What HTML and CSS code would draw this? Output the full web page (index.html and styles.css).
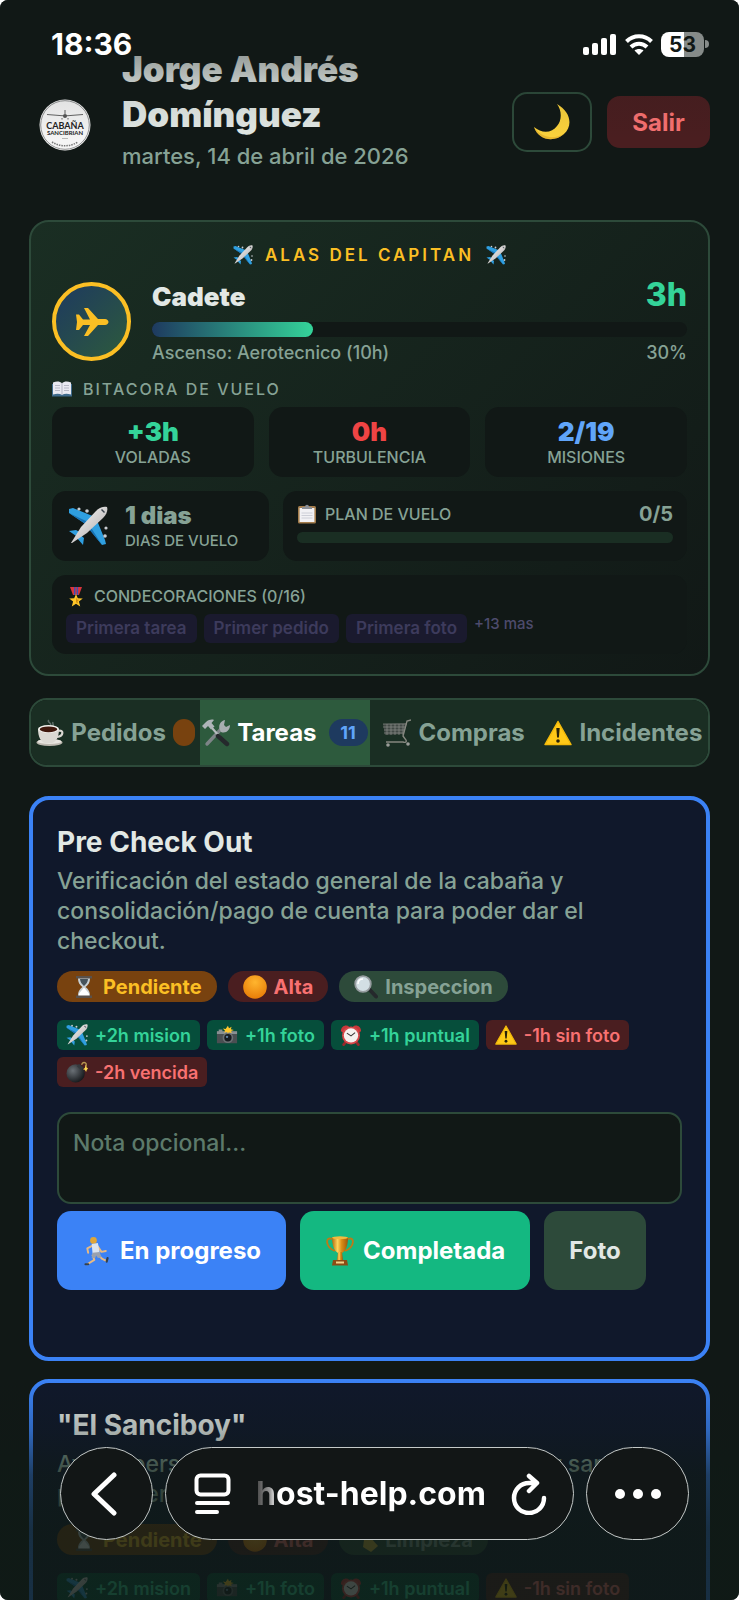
FILE: index.html
```html
<!DOCTYPE html>
<html lang="es">

<head>
    <meta charset="UTF-8">
    <meta name="viewport" content="width=device-width, initial-scale=1.0">
    <title>Cabaña Sancibrian - Tareas</title>
    <link rel="stylesheet" href="styles.css">
</head>

<body>
    <!-- icon set -->
    <svg class="sprite" aria-hidden="true">
        <defs>
            <linearGradient id="gBody" x1="0" y1="0" x2="1" y2="1">
                <stop offset="0" stop-color="#ffffff" />
                <stop offset="1" stop-color="#a9a4a4" />
            </linearGradient>
            <linearGradient id="gGold" x1="0" y1="0" x2="1" y2="0">
                <stop offset="0" stop-color="#b36a0c" />
                <stop offset=".35" stop-color="#ffd45c" />
                <stop offset=".6" stop-color="#d98d16" />
                <stop offset="1" stop-color="#9c5608" />
            </linearGradient>
            <radialGradient id="gOrange" cx=".5" cy=".3" r=".7">
                <stop offset="0" stop-color="#ffb52e" />
                <stop offset="1" stop-color="#e87d08" />
            </radialGradient>
            <radialGradient id="gBomb" cx=".35" cy=".35" r=".7">
                <stop offset="0" stop-color="#6a7076" />
                <stop offset="1" stop-color="#15181b" />
            </radialGradient>
        </defs>
        <symbol id="plane" viewBox="0 0 40 40">
            <path fill="#2f9fe0" d="M1 3l4-1 22 9-8 8L1 7zM38 38l-4 1-15-19 9-8 9 22zM1 25l7-1 7 4-4 4zM15 39l1-7-5-4-2 4z" />
            <path fill="#1873b5" d="M1 7l17 8 1 4L1 7zM34 39L20 22l2-2z" />
            <g fill="#c9cdd2">
                <circle cx="11" cy="3" r="1.6" /><circle cx="19" cy="5" r="1.8" />
                <circle cx="38" cy="22" r="1.6" /><circle cx="37" cy="30" r="1.8" />
            </g>
            <path fill="url(#gBody)" d="M39 1c1 3 0 7-4 11L19 27 4 37l-1 0 10-16L28 5c4-4 8-5 11-4z" />
            <path fill="#39424c" d="M34 3l3 3-1 1-3-3z" />
        </symbol>
        <symbol id="book" viewBox="0 0 20 16">
            <path fill="#3f6b8c" d="M0 3h20v12.500H0z" />
            <path fill="#e9e9f1" d="M1 1.500c4-1.500 7-1 9 .8V14c-2-1.300-5-1.500-9-.5zM19 1.500c-4-1.500-7-1-9 .8V14c2-1.300 5-1.500 9-.5z" />
            <path stroke="#a2a3b2" stroke-width=".7" fill="none" d="M3 4.500h5M3 7h5M3 9.500h5M12 4.500h5M12 7h5M12 9.500h5M10 2v12" />
        </symbol>
        <symbol id="clipboard" viewBox="0 0 20 20">
            <rect x="1" y="2" width="18" height="17.500" rx="1.500" fill="#a47d4c" />
            <rect x="2.600" y="4" width="14.800" height="14" fill="#f1f1f4" />
            <path stroke="#c4c6cf" stroke-width=".8" d="M4.500 9h11M4.500 11.500h11M4.500 14h11" />
            <path fill="#8b9098" d="M5 5V3h3c0-3 4-3 4 0h3v2z" />
        </symbol>
        <symbol id="medal" viewBox="0 0 20 20">
            <path fill="#d8343c" d="M4 0h12l-3 8H7z" />
            <path fill="#3c53b5" d="M8 0h1.400v8H8zM10.700 0h1.400v8h-1.400z" />
            <path fill="#ffc629" d="M10 7l1.800 4.300 5 .3-3.900 3 1.300 4.900-4.200-2.800-4.200 2.800 1.300-4.900-3.900-3 5-.3z" />
            <path fill="#d08c0c" d="M10 10l.9 2.600 2.500.1-2 1.500.7 2.400-2.100-1.400z" />
        </symbol>
        <symbol id="coffee" viewBox="0 0 28 28">
            <path stroke="#7b8784" stroke-width="1.500" fill="none" opacity=".7" d="M13 1c-3 2 4 3 1 6M17 3c-1 2 1 2 0 4" />
            <ellipse cx="13.500" cy="23.500" rx="13" ry="3.500" fill="#bdb8b0" />
            <ellipse cx="13.500" cy="22.500" rx="12" ry="2.600" fill="#e8e5df" />
            <path fill="none" stroke="#d8d5d0" stroke-width="2.200" d="M22 12c6-2 6 5-1 6" />
            <path fill="#dcd9d3" d="M2 10h21c0 8-3 13-7 14H9c-4-1-7-6-7-14z" />
            <ellipse cx="12.500" cy="10" rx="10.500" ry="4" fill="#f2f0ec" />
            <ellipse cx="12.500" cy="10.300" rx="8.800" ry="2.900" fill="#40180d" />
        </symbol>
        <symbol id="tools" viewBox="0 0 28 28">
            <path fill="none" stroke="#7d8487" stroke-width="3.400" stroke-linecap="round" d="M21 8L5 25" />
            <path fill="#a8aeb1" d="M18 11c-2-4 0-9 5-10l-1 5 2 2 4-2c0 5-4 9-9 7z" />
            <path stroke="#b6bbbe" stroke-width="2.200" d="M10 9l8 9" />
            <path stroke="#25292c" stroke-width="4.400" stroke-linecap="round" d="M16 17l9 8" />
            <path fill="#aeb4b8" d="M0 7l4-4c3-2.500 6-3 8-2L9.500 4l3 3.500-3.500 3L6 7 3 10z" />
        </symbol>
        <symbol id="cart" viewBox="0 0 28 28">
            <path fill="#414945" d="M0 5l24-1-3 11-19 1z" />
            <path fill="none" stroke="#8a8c88" stroke-width=".7" d="M0 5h24M0 8h23M1 11h21M1 14h20M4 5v11M8 5v11M12 5v11M16 5v11M20 5v11" />
            <path fill="none" stroke="#85877f" stroke-width="1.400" d="M28 1l-4 1-4 15 3 4c1 2-1 3-3 2L3 23" />
            <circle cx="5" cy="26" r="1.800" fill="#9a9c98" /><circle cx="25" cy="25" r="1.800" fill="#9a9c98" />
        </symbol>
        <symbol id="warning" viewBox="0 0 28 26">
            <path fill="#ffc918" stroke="#f2b90a" stroke-width="1.500" stroke-linejoin="round" d="M14 1.500L27 24.500H1z" />
            <path fill="#282209" d="M12.300 8h3.400l-.8 9.500h-1.800z" />
            <circle cx="14" cy="21" r="1.800" fill="#282209" />
        </symbol>
        <symbol id="hourglass" viewBox="0 0 24 24">
            <path fill="#c7cfd3" d="M6 3h12c0 5-2 7-4.500 9 2.500 2 4.500 4 4.500 9H6c0-5 2-7 4.500-9C8 10 6 8 6 3z" />
            <path fill="#46535b" d="M8 4h8c0 3-2 5-4 7-2-2-4-4-4-7z" />
            <path fill="#fff" d="M12 12.500l5 6V21H7v-2.500z" />
            <path fill="#59514b" d="M4 1h16v2.500H4zM4 20.500h16V23H4z" />
        </symbol>
        <symbol id="orange" viewBox="0 0 24 24">
            <circle cx="12" cy="12" r="11.800" fill="url(#gOrange)" />
        </symbol>
        <symbol id="lens" viewBox="0 0 24 24">
            <path stroke="#25292c" stroke-width="4" stroke-linecap="round" d="M15 14l7 7.500" />
            <circle cx="9" cy="9" r="7.800" fill="#d3dfe4" stroke="#979da0" stroke-width="1.800" />
            <path fill="none" stroke="#fff" stroke-width="1.500" d="M4 9c0-3 2-5 5-5" />
        </symbol>
        <symbol id="camera" viewBox="0 0 24 20">
            <path fill="#4a4f52" d="M1 6h22v13H1z" />
            <path fill="#899093" d="M1 6h22v3H1zM3 4h4v2H3z" />
            <circle cx="13" cy="13" r="5.800" fill="#6b7174" />
            <circle cx="13" cy="13" r="4" fill="#171b20" />
            <circle cx="12" cy="12" r="1.300" fill="#6484a4" />
            <path fill="#ffc72c" d="M13 0l1.200 2.500L17 1l-.8 2.600 3.300.9-3 1.200.6 2.100-3-.9L13 8.300l-1-1.500-3.300.7 1.300-2L7.500 3l3 .4z" />
        </symbol>
        <symbol id="alarm" viewBox="0 0 24 24">
            <path stroke="#94292b" stroke-width="3" stroke-linecap="round" d="M6 20l-2 2.500M18 20l2 2.500" />
            <path fill="#c8373a" d="M1 8C1 2 7 0 10 3L3 9zM23 8c0-6-6-8-9-5l7 6z" />
            <circle cx="12" cy="12.500" r="9.800" fill="#d6484a" />
            <circle cx="12" cy="12.500" r="7.800" fill="#f5f2ef" />
            <path fill="none" stroke="#393535" stroke-width="1.100" d="M7.500 10l4.500 3 4.500-3.500" />
        </symbol>
        <symbol id="bomb" viewBox="0 0 24 24">
            <circle cx="10.500" cy="13.500" r="10" fill="url(#gBomb)" />
            <path fill="#34393d" d="M14 3l5 4-2 3-5-4z" />
            <path fill="none" stroke="#b99752" stroke-width="1.500" d="M17 4c1-3 4-3 5-1v3" />
            <path fill="#ffd750" d="M21.500 4l1 3 1.500 1-1.500 2-.5 2-1.500-2.500L18.500 9l2-1.500z" />
        </symbol>
        <symbol id="runner" viewBox="0 0 28 34">
            <circle cx="10" cy="5" r="3.800" fill="#e0a637" />
            <path fill="none" stroke="#e7ba83" stroke-width="2.200" stroke-linecap="round" stroke-linejoin="round" d="M9 11l-6 3 1 5M15 12l4 6 5-1M9 22l2 5-8 5M16 22l4 4 4 2" />
            <path fill="#dce4ee" d="M8 9l7-1 2 11-8 1z" />
            <path fill="#9aa1ae" d="M9 19l8-1 2 6-4 1-2-3-1 3H8z" />
            <path stroke="#33404e" stroke-width="2.500" stroke-linecap="round" d="M1 32l3 0M25 29l1-4" />
        </symbol>
        <symbol id="trophy" viewBox="0 0 28 30">
            <path fill="none" stroke="#bd7a17" stroke-width="1.800" d="M6 3C-1 0-1 11 9 15M22 3c7-3 7 8-3 12" />
            <path fill="url(#gGold)" d="M6 1h16c0 8-2 14-6 16h-4C8 15 6 9 6 1z" />
            <path fill="url(#gGold)" d="M12 16h4l1 8h-6z" />
            <path fill="#8b4c16" d="M7 24h14l1 5.500H6z" />
            <path fill="#f3d489" d="M10 25.500h8v2h-8z" />
            <ellipse cx="14" cy="1.800" rx="8" ry="1.500" fill="#f2bb3e" />
        </symbol>
        <symbol id="moon" viewBox="0 0 36 36">
            <path fill="#fbd23c" d="M23 0c14 8 16 22 7 30C20 39 4 36 0 23c8 7 18 6 23-1 5-6 5-15 0-22z" />
            <path fill="#d79d22" opacity=".5" d="M0 23c4 13 20 16 30 7-9 5-22 5-30-7z" />
        </symbol>
        <symbol id="broom" viewBox="0 0 24 24">
            <path stroke="#9c6b3b" stroke-width="2" d="M3 1l10 12" />
            <path fill="#d6b53a" d="M10 12l6-3 8 9-7 6-8-5z" />
        </symbol>
    </svg>

    <div class="screen">
        <header class="header">
            <svg class="logo" viewBox="0 0 52 52" role="img" aria-label="Cabaña Sancibrian">
                <circle cx="26" cy="26" r="25.500" fill="#f5f5f5" />
                <circle cx="26" cy="26" r="24.300" fill="none" stroke="#77797a" stroke-width=".8" />
                <path fill="none" stroke="#555" stroke-width=".9" d="M8 15.500l15 1.200h6L44 15.500M26 11v4M23 19v1.500M29 19v1.500" />
                <circle cx="26" cy="17" r="2" fill="#555" />
                <text x="26" y="30" class="logo-name">CABAÑA</text>
                <text x="26" y="35.500" class="logo-sub">SANCIBRIAN</text>
                <path fill="none" stroke="#aaa" stroke-width=".8" d="M23 39.500h6" />
                <path fill="none" stroke="#777" stroke-width="1.500" stroke-dasharray="1.500 1" d="M13 43c8 5 18 5 26 0" />
            </svg>
            <div class="user">
                <h1>Jorge Andrés Domínguez</h1>
                <p>martes, 14 de abril de 2026</p>
            </div>
            <button class="theme-btn" type="button" aria-label="Modo oscuro"><svg class="icon-moon"><use href="#moon" /></svg></button>
            <button class="logout-btn" type="button">Salir</button>
        </header>

        <main class="content">
            <section class="wings">
                <h2 class="wings-title"><svg class="icon"><use href="#plane" /></svg>ALAS DEL CAPITAN<svg class="icon"><use href="#plane" /></svg></h2>

                <div class="rank">
                    <div class="rank-badge">
                        <svg viewBox="0 0 34 30" width="34" height="30" aria-hidden="true">
                            <path fill="#fbbf24" d="M1 7.500h3l4 5h7L9 1h4l10 11h7c2 0 3.500 1.500 3.500 3S32 18 30 18h-7L13 29H9l6-11H8l-4 5H1l1-8z" />
                        </svg>
                    </div>
                    <div class="rank-info">
                        <div class="rank-top">
                            <span class="rank-name">Cadete</span>
                            <span class="rank-hours">3h</span>
                        </div>
                        <div class="bar"><div class="bar-fill" style="width: 30%"></div></div>
                        <div class="rank-next"><span>Ascenso: Aerotecnico (10h)</span><span>30%</span></div>
                    </div>
                </div>

                <h3 class="log-title"><svg class="icon"><use href="#book" /></svg>BITACORA DE VUELO</h3>
                <div class="stats">
                    <div class="box stat"><strong class="green">+3h</strong><span>VOLADAS</span></div>
                    <div class="box stat"><strong class="red">0h</strong><span>TURBULENCIA</span></div>
                    <div class="box stat"><strong class="blue">2/19</strong><span>MISIONES</span></div>
                </div>

                <div class="flight">
                    <div class="box days">
                        <svg class="icon-days"><use href="#plane" /></svg>
                        <div><strong>1 dias</strong><span>DIAS DE VUELO</span></div>
                    </div>
                    <div class="box plan">
                        <div class="plan-top">
                            <span class="label"><svg class="icon"><use href="#clipboard" /></svg>PLAN DE VUELO</span>
                            <strong>0/5</strong>
                        </div>
                        <div class="plan-bar"></div>
                    </div>
                </div>

                <div class="box medals">
                    <span class="label"><svg class="icon"><use href="#medal" /></svg>CONDECORACIONES (0/16)</span>
                    <div class="medal-list">
                        <span class="medal">Primera tarea</span>
                        <span class="medal">Primer pedido</span>
                        <span class="medal">Primera foto</span>
                        <span class="medal-more">+13 mas</span>
                    </div>
                </div>
            </section>

            <nav class="tabs">
                <button type="button" class="tab"><svg class="icon-tab"><use href="#coffee" /></svg>Pedidos<span class="count empty"></span></button>
                <button type="button" class="tab active"><svg class="icon-tab"><use href="#tools" /></svg>Tareas<span class="count">11</span></button>
                <button type="button" class="tab"><svg class="icon-tab"><use href="#cart" /></svg>Compras</button>
                <button type="button" class="tab"><svg class="icon-tab"><use href="#warning" /></svg>Incidentes</button>
            </nav>

            <article class="task">
                <h2>Pre Check Out</h2>
                <p class="task-desc">Verificación del estado general de la cabaña y consolidación/pago de cuenta para poder dar el checkout.</p>
                <div class="tags">
                    <span class="tag pending"><svg class="icon-tag"><use href="#hourglass" /></svg>Pendiente</span>
                    <span class="tag high"><svg class="icon-tag"><use href="#orange" /></svg>Alta</span>
                    <span class="tag kind"><svg class="icon-tag"><use href="#lens" /></svg>Inspeccion</span>
                </div>
                <div class="points">
                    <span class="point plus"><svg class="icon-point"><use href="#plane" /></svg>+2h mision</span>
                    <span class="point plus"><svg class="icon-point"><use href="#camera" /></svg>+1h foto</span>
                    <span class="point plus"><svg class="icon-point"><use href="#alarm" /></svg>+1h puntual</span>
                    <span class="point minus"><svg class="icon-point"><use href="#warning" /></svg>-1h sin foto</span>
                    <span class="point minus"><svg class="icon-point"><use href="#bomb" /></svg>-2h vencida</span>
                </div>
                <textarea class="note" placeholder="Nota opcional..." aria-label="Nota opcional"></textarea>
                <div class="actions">
                    <button type="button" class="btn btn-blue"><svg class="icon-btn"><use href="#runner" /></svg>En progreso</button>
                    <button type="button" class="btn btn-green"><svg class="icon-btn"><use href="#trophy" /></svg>Completada</button>
                    <button type="button" class="btn btn-photo">Foto</button>
                </div>
            </article>

            <article class="task">
                <h2>"El Sanciboy"</h2>
                <p class="task-desc">Avisar persona por persona en cabaña y dejar sartenes para diversos usos.</p>
                <div class="tags">
                    <span class="tag pending"><svg class="icon-tag"><use href="#hourglass" /></svg>Pendiente</span>
                    <span class="tag high"><svg class="icon-tag"><use href="#orange" /></svg>Alta</span>
                    <span class="tag kind"><svg class="icon-tag"><use href="#broom" /></svg>Limpieza</span>
                </div>
                <div class="points">
                    <span class="point plus"><svg class="icon-point"><use href="#plane" /></svg>+2h mision</span>
                    <span class="point plus"><svg class="icon-point"><use href="#camera" /></svg>+1h foto</span>
                    <span class="point plus"><svg class="icon-point"><use href="#alarm" /></svg>+1h puntual</span>
                    <span class="point minus"><svg class="icon-point"><use href="#warning" /></svg>-1h sin foto</span>
                </div>
            </article>
        </main>

        <div class="status-bar">
            <span class="clock">18:36</span>
            <div class="status-icons">
                <svg width="34" height="21" viewBox="0 0 34 21" fill="#fff">
                    <rect x="0" y="13" width="6" height="8" rx="2" /><rect x="9" y="9" width="6" height="12" rx="2" />
                    <rect x="18" y="4" width="6" height="17" rx="2" /><rect x="27" y="0" width="6" height="21" rx="2" />
                </svg>
                <svg width="28" height="21" viewBox="0 0 28 21" fill="none" stroke="#fff" stroke-width="4">
                    <path d="M1.500 7.500c7-7 18-7 25 0" />
                    <path d="M6 13c4.500-4.500 11.500-4.500 16 0" />
                    <path fill="#fff" stroke="none" d="M14 21l-4.500-4.500c2.500-2 6.500-2 9 0z" />
                </svg>
                <div class="battery"><span>53</span></div>
            </div>
        </div>

        <div class="bottom-bar">
            <button type="button" class="nav-btn" aria-label="Atrás">
                <svg width="26" height="44" viewBox="0 0 26 44" fill="none" stroke="#fff" stroke-width="5" stroke-linecap="round" stroke-linejoin="round"><path d="M23 3L3 22l20 19" /></svg>
            </button>
            <div class="address">
                <button type="button" class="plain-btn" aria-label="Lector">
                    <svg width="37" height="42" viewBox="0 0 37 42" fill="none" stroke="#fff" stroke-width="4" stroke-linecap="round"><rect x="2.500" y="2.500" width="32" height="19" rx="4" /><path d="M3 30h31M3 39h20" /></svg>
                </button>
                <span class="url">host-help.com</span>
                <button type="button" class="plain-btn" aria-label="Recargar">
                    <svg width="36" height="42" viewBox="0 0 36 42" fill="none" stroke="#fff" stroke-width="4.500" stroke-linecap="round" stroke-linejoin="round"><path d="M33 25A15 15 0 1 1 18 10h7M18 3l8 7-8 8" /></svg>
                </button>
            </div>
            <button type="button" class="nav-btn more" aria-label="Más">
                <svg width="46" height="10" viewBox="0 0 46 10" fill="#fff"><circle cx="5" cy="5" r="5" /><circle cx="23" cy="5" r="5" /><circle cx="41" cy="5" r="5" /></svg>
            </button>
        </div>
    </div>
</body>

</html>
```

FILE: styles.css
```css
* {
    box-sizing: border-box;
}

html {
    background-color: #fff;
}

body {
    margin: 0;
    font-family: Inter, "Liberation Sans", sans-serif;
    color: #e2e8e5;
}

h1, h2, h3, p {
    margin: 0;
}

button {
    font-family: inherit;
    border: none;
    padding: 0;
    cursor: pointer;
}

svg {
    flex-shrink: 0;
}

.sprite {
    position: absolute;
    width: 0;
    height: 0;
}

.screen {
    position: relative;
    height: 100vh;
    overflow: hidden;
    border-radius: 8px;
    background-color: #111816;
}

/* header */
.header {
    display: flex;
    align-items: center;
    padding: 47px 29px 0 39px;
}

.logo {
    width: 52px;
    height: 52px;
    margin: 6px 31px 0 0;
}

.logo-name, .logo-sub {
    font-family: Lato, sans-serif;
    font-weight: 700;
    text-anchor: middle;
    fill: #222;
}

.logo-name {
    font-size: 9px;
}

.logo-sub {
    font-size: 6px;
}

.user {
    flex: 1;
    padding-bottom: 26px;
}

.user h1 {
    max-width: 300px;
    font-size: 35px;
    line-height: 45px;
    font-weight: 900;
}

.user p {
    margin-top: 4px;
    font-size: 22px;
    line-height: 30px;
    font-weight: 500;
    color: #86a295;
}

.theme-btn {
    display: flex;
    align-items: center;
    justify-content: center;
    width: 80px;
    height: 60px;
    margin-right: 15px;
    border: 2px solid #2d4a3a;
    border-radius: 15px;
    background-color: transparent;
}

.icon-moon {
    width: 36px;
    height: 36px;
}

.logout-btn {
    width: 103px;
    height: 52px;
    border-radius: 13px;
    background-color: #4a1e20;
    color: #f87171;
    font-size: 24px;
    font-weight: 700;
}

.content {
    padding: 23px 29px 0;
}

/* captain wings card */
.wings {
    padding: 21px 21px 20px;
    border: 2px solid #2d4a3a;
    border-radius: 20px;
    background: linear-gradient(135deg, #1a2e23, #111816);
}

.icon {
    width: 20px;
    height: 20px;
}

.wings-title {
    display: flex;
    align-items: center;
    justify-content: center;
    gap: 12px;
    font-size: 17px;
    line-height: 24px;
    font-weight: 600;
    letter-spacing: 3px;
    color: #fbbf24;
}

.rank {
    display: flex;
    align-items: center;
    gap: 21px;
    margin-top: 12px;
}

.rank-badge {
    display: flex;
    align-items: center;
    justify-content: center;
    width: 79px;
    height: 79px;
    border: 4px solid #fbbf24;
    border-radius: 50%;
    background: linear-gradient(135deg, #1e3a5f, #2d5a3d);
}

.rank-info {
    flex: 1;
}

.rank-top {
    display: flex;
    align-items: baseline;
    justify-content: space-between;
    line-height: 32px;
}

.rank-name {
    font-size: 26px;
    font-weight: 900;
}

.rank-hours {
    font-size: 32px;
    font-weight: 800;
    color: #34d399;
}

.bar {
    height: 15px;
    margin-top: 9px;
    border-radius: 8px;
    background-color: #111816;
}

.bar-fill {
    height: 100%;
    border-radius: 8px;
    background: linear-gradient(90deg, #1e3a5f, #34d399);
}

.rank-next {
    display: flex;
    justify-content: space-between;
    margin-top: 5px;
    font-size: 18px;
    line-height: 22px;
    font-weight: 500;
    color: #86a295;
}

.log-title {
    display: flex;
    align-items: center;
    gap: 11px;
    margin: 14px 0 7px;
    font-size: 16px;
    line-height: 22px;
    font-weight: 500;
    letter-spacing: 2px;
    color: #86a295;
}

.box {
    border-radius: 14px;
    background-color: #111816;
}

.stats {
    display: grid;
    grid-template-columns: repeat(3, 1fr);
    gap: 15px;
}

.stat {
    display: flex;
    flex-direction: column;
    align-items: center;
    padding: 10px 10px 9px;
}

.stat strong {
    font-size: 26px;
    line-height: 30px;
    font-weight: 900;
}

.stat span, .label {
    font-size: 16px;
    line-height: 21px;
    font-weight: 500;
    color: #86a295;
}

.green {
    color: #34d399;
}

.red {
    color: #ef4444;
}

.blue {
    color: #60a5fa;
}

.flight {
    display: grid;
    grid-template-columns: 217px 1fr;
    gap: 14px;
    margin: 14px 0;
}

.days {
    display: flex;
    align-items: center;
    gap: 17px;
    padding: 10px 16px;
    color: #86a295;
}

.icon-days {
    width: 40px;
    height: 40px;
}

.days strong {
    display: block;
    font-size: 24px;
    line-height: 30px;
    font-weight: 900;
}

.days span {
    display: block;
    font-size: 15px;
    line-height: 20px;
    font-weight: 500;
}

.plan {
    padding: 11px 14px;
}

.plan-top {
    display: flex;
    align-items: center;
    justify-content: space-between;
    color: #86a295;
}

.plan-top strong {
    font-size: 20px;
    line-height: 24px;
    font-weight: 700;
}

.label {
    display: flex;
    align-items: center;
    gap: 8px;
}

.plan-bar {
    height: 11px;
    margin-top: 6px;
    border-radius: 6px;
    background-color: #1a2e23;
}

.medals {
    padding: 11px 14px;
}

.medal-list {
    display: flex;
    gap: 7px;
    margin-top: 7px;
    font-size: 17px;
    font-weight: 600;
    line-height: 29px;
    color: #3d3b5c;
}

.medal {
    padding: 0 10px;
    border-radius: 6px;
    background-color: #1a1a2e;
}

.medal-more {
    font-size: 15px;
    line-height: 20px;
    font-weight: 500;
    color: #4d4b6c;
}

/* tabs */
.tabs {
    display: grid;
    grid-template-columns: repeat(4, minmax(0, 1fr));
    height: 69px;
    margin: 22px 0 29px;
    border: 2px solid #2d4a3a;
    border-radius: 18px;
    overflow: hidden;
}

.tab {
    display: flex;
    align-items: center;
    justify-content: center;
    gap: 7px;
    background-color: #1a2e23;
    color: #86a295;
    font-size: 24px;
    font-weight: 700;
}

.tab.active {
    background-color: #2d5a3d;
    color: #fff;
}

.icon-tab {
    width: 28px;
    height: 28px;
}

.count {
    min-width: 39px;
    height: 27px;
    margin-left: 5px;
    border-radius: 14px;
    background-color: #1e3a5f;
    color: #60a5fa;
    font-size: 18px;
    line-height: 27px;
}

.count.empty {
    min-width: 22px;
    margin-left: 0;
    background-color: #78420f;
}

/* tasks */
.task {
    margin-bottom: 18px;
    padding: 25px 24px 67px;
    border: 4px solid #3b82f6;
    border-radius: 20px;
    background-color: #10182b;
}

.task h2 {
    font-size: 28px;
    line-height: 34px;
    font-weight: 700;
}

.task-desc {
    margin-top: 7px;
    font-size: 23px;
    line-height: 30px;
    font-weight: 500;
    color: #86a295;
}

.tags {
    display: flex;
    gap: 11px;
    margin-top: 15px;
}

.tag {
    display: flex;
    align-items: center;
    gap: 7px;
    height: 31px;
    padding: 0 15px;
    border-radius: 16px;
    font-size: 20px;
    font-weight: 700;
}

.icon-tag {
    width: 24px;
    height: 24px;
}

.pending {
    background-color: #78420f;
    color: #fbbf24;
}

.high {
    background-color: #4a1e20;
    color: #f87171;
}

.kind {
    background-color: #2d4a3a;
    color: #86a295;
}

.points {
    display: flex;
    flex-wrap: wrap;
    gap: 7px;
    margin-top: 18px;
}

.point {
    display: flex;
    align-items: center;
    gap: 7px;
    height: 30px;
    padding: 0 9px;
    border-radius: 6px;
    font-size: 18px;
    font-weight: 600;
}

.icon-point {
    width: 22px;
    height: 22px;
}

.plus {
    background-color: #064e3b;
    color: #34d399;
}

.minus {
    background-color: #4a1e20;
    color: #f87171;
}

.note {
    display: block;
    width: 100%;
    height: 92px;
    margin-top: 25px;
    padding: 14px;
    border: 2px solid #2d4a3a;
    border-radius: 14px;
    background-color: #111816;
    color: #e2e8e5;
    font-family: inherit;
    font-size: 23px;
    font-weight: 500;
    line-height: 30px;
    resize: none;
}

.note::placeholder {
    color: #5c7a6b;
}

.actions {
    display: flex;
    gap: 14px;
    margin-top: 7px;
}

.btn {
    display: flex;
    align-items: center;
    gap: 8px;
    height: 79px;
    padding: 0 25px;
    border-radius: 14px;
    color: #fff;
    font-size: 24px;
    font-weight: 700;
}

.icon-btn {
    width: 30px;
    height: 30px;
}

.btn-blue {
    background-color: #3b82f6;
}

.btn-green {
    background-color: #14b881;
}

.btn-photo {
    background-color: #2d4a3a;
    color: #e2e8e5;
}

/* phone status bar, fades the page under it */
.status-bar {
    position: absolute;
    top: 0;
    left: 0;
    right: 0;
    display: flex;
    align-items: flex-start;
    justify-content: space-between;
    height: 140px;
    padding: 27px 30px 0 51px;
    background: linear-gradient(rgba(17, 24, 22, 0.9) 0, rgba(17, 24, 22, 0.4) 50px, rgba(17, 24, 22, 0.1) 90px, transparent);
    pointer-events: none;
}

.clock {
    font-size: 30px;
    line-height: 35px;
    font-weight: 700;
    color: #fff;
}

.status-icons {
    display: flex;
    align-items: center;
    gap: 8px;
    height: 35px;
}

.battery {
    width: 43px;
    height: 25px;
    margin-right: 5px;
    border-radius: 8px;
    background: linear-gradient(90deg, #fff 53%, #868b89 53%);
    color: #111816;
    font-size: 21px;
    line-height: 25px;
    font-weight: 700;
    text-align: center;
}

.battery::after {
    content: "";
    position: absolute;
    width: 4px;
    height: 8px;
    margin: 8px 0 0 9px;
    border-radius: 0 4px 4px 0;
    background-color: #868b89;
}

/* browser bar */
.bottom-bar {
    position: absolute;
    left: 0;
    right: 0;
    bottom: 0;
    display: flex;
    gap: 12px;
    height: 220px;
    padding: 67px 50px 60px 60px;
    background: linear-gradient(transparent, rgba(15, 26, 22, 0.25) 50px, rgba(15, 26, 22, 0.65) 95px, rgba(15, 26, 22, 0.8) 150px, rgba(15, 26, 22, 0.8));
}

.nav-btn, .address {
    display: flex;
    align-items: center;
    justify-content: center;
    height: 93px;
    border: 1px solid #c4c9c8;
    border-radius: 47px;
    background-color: #121616;
}

.nav-btn {
    width: 93px;
    padding-right: 6px;
}

.nav-btn.more {
    width: 103px;
    padding: 0;
}

.address {
    flex: 1;
    justify-content: space-between;
    padding: 0 26px 0 28px;
}

.plain-btn {
    display: flex;
    background: none;
}

.url {
    font-size: 32px;
    font-weight: 700;
    color: transparent;
    background: linear-gradient(90deg, #444 0, #999 14px, #fff 20px);
    background-clip: text;
    -webkit-background-clip: text;
}
```
